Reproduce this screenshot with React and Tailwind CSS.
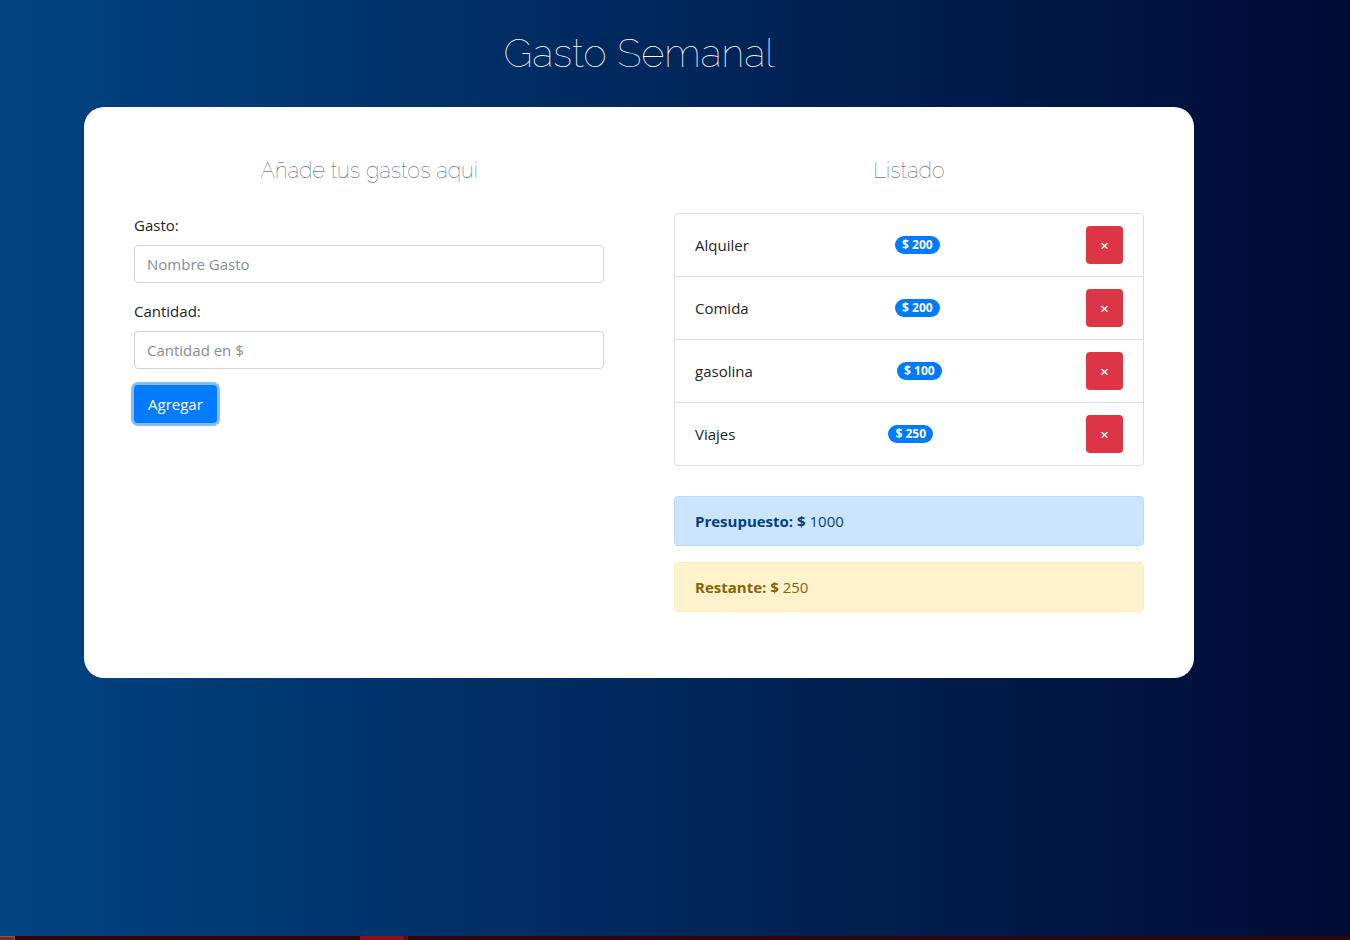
import React from "react";

const gastos = [
  { nombre: "Alquiler", cantidad: 200 },
  { nombre: "Comida", cantidad: 200 },
  { nombre: "gasolina", cantidad: 100 },
  { nombre: "Viajes", cantidad: 250 },
];

function Campo({ id, label, placeholder }) {
  return (
    <div className="mb-4">
      <label htmlFor={id} className="mb-2 block">{label}</label>
      <input
        id={id}
        type="text"
        placeholder={placeholder}
        className="block h-[38px] w-full rounded border border-[#ced4da] bg-white px-3 placeholder:text-[#868e96]"
      />
    </div>
  );
}

function Titulo({ children }) {
  return (
    <h2 className="mb-[30px] text-center font-['Raleway','Lato',sans-serif] text-[22px] leading-[26px] font-thin text-[#1f4468]">
      {children}
    </h2>
  );
}

export default function App() {
  return (
    <div className="flex min-h-screen flex-col bg-linear-to-r from-[#004482] to-[#000b35] font-['Segoe_UI','Open_Sans',sans-serif] text-[15px] leading-6 text-[#212529]">
      <div className="flex-1 pr-[72px]">
        <header className="pt-[29px]">
          <h1 className="text-center font-['Raleway','Lato',sans-serif] text-[40px] leading-12 font-thin text-white">
            Gasto Semanal
          </h1>
        </header>
        <main className="mx-auto mt-[30px] grid max-w-[1110px] grid-cols-2 gap-[70px] rounded-[20px] bg-white px-[50px] pt-[50px] pb-[50px]">
          <section>
            <Titulo>Añade tus gastos aqui</Titulo>
            <form onSubmit={(e) => e.preventDefault()}>
              <Campo id="gasto" label="Gasto:" placeholder="Nombre Gasto" />
              <Campo id="cantidad" label="Cantidad:" placeholder="Cantidad en $" />
              <button
                type="submit"
                className="h-[38px] rounded bg-[#007bff] px-3.5 text-white ring-3 ring-[#80bdff]"
              >
                Agregar
              </button>
            </form>
          </section>
          <section>
            <Titulo>Listado</Titulo>
            <ul className="divide-y divide-[#dfdfdf] rounded border border-[#dfdfdf]">
              {gastos.map((g) => (
                <li key={g.nombre} className="flex items-center justify-between px-5 py-3">
                  {g.nombre}
                  <span className="rounded-full bg-[#007bff] px-[7px] text-xs leading-[18px] font-bold text-white">
                    $ {g.cantidad}
                  </span>
                  <button
                    type="button"
                    aria-label={`Borrar ${g.nombre}`}
                    className="h-[38px] w-[37px] rounded bg-[#dc3545] font-semibold text-white"
                  >
                    ×
                  </button>
                </li>
              ))}
            </ul>
            <div className="mt-[30px] mb-4 rounded border border-[#b8daff] bg-[#cce5ff] px-5 py-3 text-[#004085]">
              <strong>Presupuesto: $</strong> 1000
            </div>
            <div className="mb-4 rounded border border-[#ffeeba] bg-[#fff3cd] px-5 py-3 text-[#856404]">
              <strong>Restante: $</strong> 250
            </div>
          </section>
        </main>
      </div>
      <footer className="flex h-1 bg-[#2e0508]">
        <div className="w-[15px] border-t border-r border-[#8c5558] bg-[#6b3034]" />
        <div className="ml-[345px] w-11 bg-[#8e0e19]" />
        <div className="w-1 border-l border-[#3d060b] bg-[#640d14]" />
      </footer>
    </div>
  );
}
